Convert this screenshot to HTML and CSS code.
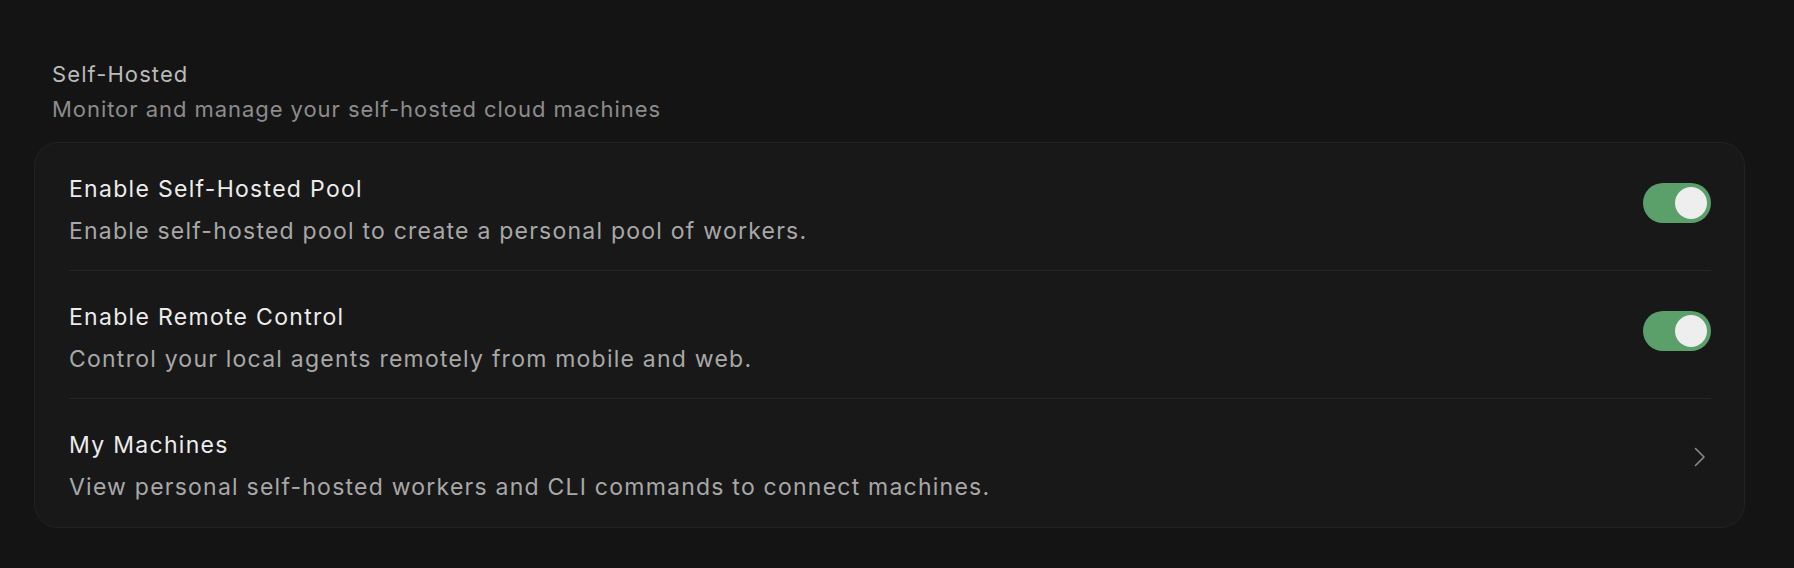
FILE: index.html
```html
<!DOCTYPE html>
<html lang="en">
<head>
<meta charset="utf-8">
<title>Self-Hosted</title>
<link rel="stylesheet" href="styles.css">
</head>
<body>
<main class="page">
  <header class="section-head">
    <div class="section-title">Self-Hosted</div>
    <div class="section-sub">Monitor and manage your self-hosted cloud machines</div>
  </header>
  <section class="card">
    <div class="row">
      <div class="row-text">
        <div class="row-title">Enable Self-Hosted Pool</div>
        <div class="row-desc">Enable self-hosted pool to create a personal pool of workers.</div>
      </div>
      <div class="toggle on"><span class="knob"></span></div>
    </div>
    <div class="row">
      <div class="row-text">
        <div class="row-title">Enable Remote Control</div>
        <div class="row-desc">Control your local agents remotely from mobile and web.</div>
      </div>
      <div class="toggle on"><span class="knob"></span></div>
    </div>
    <div class="row last">
      <div class="row-text">
        <div class="row-title">My Machines</div>
        <div class="row-desc">View personal self-hosted workers and CLI commands to connect machines.</div>
      </div>
      <svg class="chevron" width="12" height="20" viewBox="0 0 12 20" aria-hidden="true">
        <path d="M1.5 1.5 L10 10 L1.5 18.5" fill="none" stroke="#8a8a8a" stroke-width="1.6" stroke-linecap="round" stroke-linejoin="round"/>
      </svg>
    </div>
  </section>
</main>
</body>
</html>
```
FILE: styles.css
```css
html, body {
  margin: 0;
  padding: 0;
  background: #141414;
}
body {
  font-family: Inter, "Noto Sans", "Liberation Sans", sans-serif;
  -webkit-font-smoothing: antialiased;
}
.page {
  padding: 57px 49px 0 34px;
}
.section-head {
  padding: 0 18px;
  margin-bottom: 15px;
}
.section-title {
  font-size: 22px;
  line-height: 35px;
  letter-spacing: 1.1px;
  color: #bababa;
}
.section-sub {
  font-size: 22px;
  line-height: 35px;
  letter-spacing: 0.95px;
  color: #8c8c8c;
}
.card {
  background: #181818;
  border: 1px solid #222222;
  border-radius: 24px;
  padding: 0 33px 0 34px;
}
.row {
  display: flex;
  align-items: flex-start;
  justify-content: space-between;
  height: 128px;
  box-sizing: border-box;
  border-bottom: 1px solid #252525;
  padding-top: 31px;
}
.row.last {
  border-bottom: none;
}
.row-text {
  display: flex;
  flex-direction: column;
  gap: 12px;
}
.row-title {
  font-size: 23px;
  line-height: 30px;
  letter-spacing: 1.3px;
  color: #ececec;
}
.row-desc {
  font-size: 23px;
  line-height: 30px;
  letter-spacing: 1.23px;
  color: #a8a8a8;
}
.toggle {
  width: 68px;
  height: 40px;
  border-radius: 20px;
  background: #5b9f6b;
  box-sizing: border-box;
  padding: 4px;
  display: flex;
  justify-content: flex-end;
  margin-top: 9px;
}
.knob {
  width: 32px;
  height: 32px;
  border-radius: 50%;
  background: #eeeeee;
}
.chevron {
  margin-top: 17px;
  margin-right: 5px;
}
```
